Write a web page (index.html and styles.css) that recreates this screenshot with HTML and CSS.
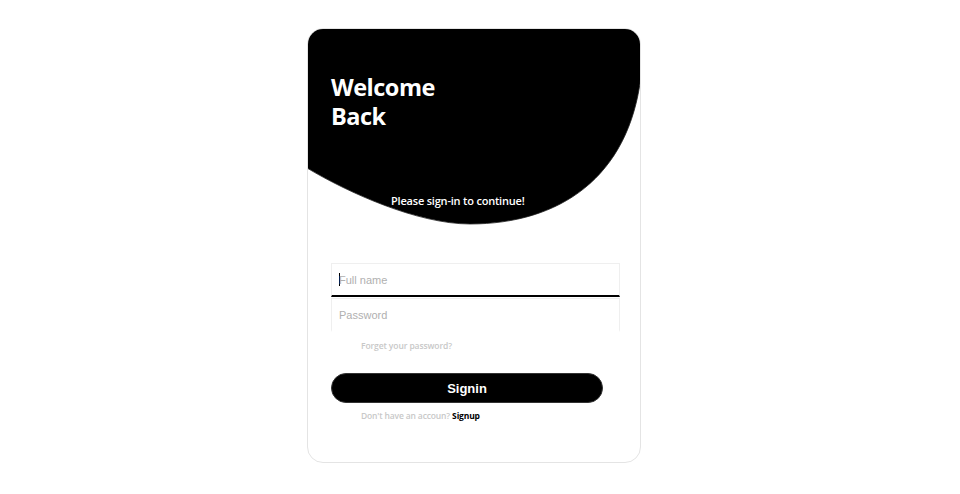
FILE: index.html
```html
<!DOCTYPE html>
<html lang="en">
<head>
<meta charset="utf-8">
<title>Sign in</title>
<link rel="stylesheet" href="styles.css">
</head>
<body>
<div class="card">
  <div class="header">
    <svg class="blob" width="334" height="200" viewBox="0 0 334 200" aria-hidden="true">
      <path d="M0 0 H334 V48 C322 150 252 196 163 196 C110 196 40 164 0 140 Z" fill="#000" stroke="#222" stroke-width="0.8"/>
    </svg>
    <h1 class="title"><span class="line">Welcome</span><span class="line">Back</span></h1>
    <p class="subtitle">Please sign-in to continue!</p>
  </div>
  <form class="form">
    <div class="fields">
      <div class="field focused"><span class="caret"></span><span class="ph">Full name</span></div>
      <div class="field last"><span class="ph">Password</span></div>
    </div>
    <a class="forgot">Forget your password?</a>
    <button type="button" class="btn">Signin</button>
    <p class="signup">Don't have an accoun? <b>Signup</b></p>
  </form>
</div>
</body>
</html>
```

FILE: styles.css
```css
html, body {
  margin: 0;
  padding: 0;
  background: #fff;
}
body {
  font-family: "Open Sans", "DejaVu Sans", sans-serif;
}
.card {
  box-sizing: border-box;
  width: 334px;
  height: 435px;
  margin: 28px 0 0 307px;
  border: 1px solid #e4e4e4;
  border-radius: 16px;
  overflow: hidden;
  background: #fff;
}
.header {
  position: relative;
  height: 196px;
}
.blob {
  position: absolute;
  left: -1px;
  top: -1px;
}
.title {
  position: relative;
  margin: 0;
  padding: 44px 0 0 23px;
  color: #fff;
  font-size: 23.5px;
  line-height: 29px;
  font-weight: 700;
  letter-spacing: -0.5px;
}
.title .line {
  display: block;
  height: 29px;
  overflow: visible;
}
.subtitle {
  position: relative;
  margin: 62px 0 0 83px;
  color: #fff;
  font-size: 11px;
  line-height: 16px;
  font-weight: 600;
  letter-spacing: -0.2px;
}
.form {
  padding: 38px 20px 0 23px;
}
.fields {
  display: flex;
  flex-direction: column;
  gap: 1px;
}
.field {
  box-sizing: border-box;
  height: 34px;
  border: 1px solid #efefef;
  border-bottom: 2px solid #fff;
  display: flex;
  align-items: center;
  padding-left: 7px;
  font-family: "Liberation Sans", Arial, sans-serif;
  font-size: 11px;
  color: #b0b0b0;
}
.field.focused {
  border-bottom-color: #000;
}
.caret {
  width: 1px;
  height: 13px;
  background: #000;
  margin-right: -1px;
}
.forgot {
  display: block;
  margin: 8px 0 0 30px;
  font-size: 8.5px;
  line-height: 12px;
  font-weight: 600;
  letter-spacing: -0.1px;
  color: #c8c8c8;
}
.btn {
  display: block;
  box-sizing: border-box;
  width: 272px;
  height: 30px;
  margin-top: 21px;
  border: 1px solid #333;
  border-radius: 15px;
  background: #000;
  color: #fff;
  font-family: "Liberation Sans", Arial, sans-serif;
  font-size: 13px;
  font-weight: 700;
}
.signup {
  margin: 7px 0 0 30px;
  font-size: 8.5px;
  line-height: 12px;
  font-weight: 600;
  letter-spacing: -0.15px;
  color: #c8c8c8;
}
.signup b {
  color: #000;
  font-weight: 700;
}
```
